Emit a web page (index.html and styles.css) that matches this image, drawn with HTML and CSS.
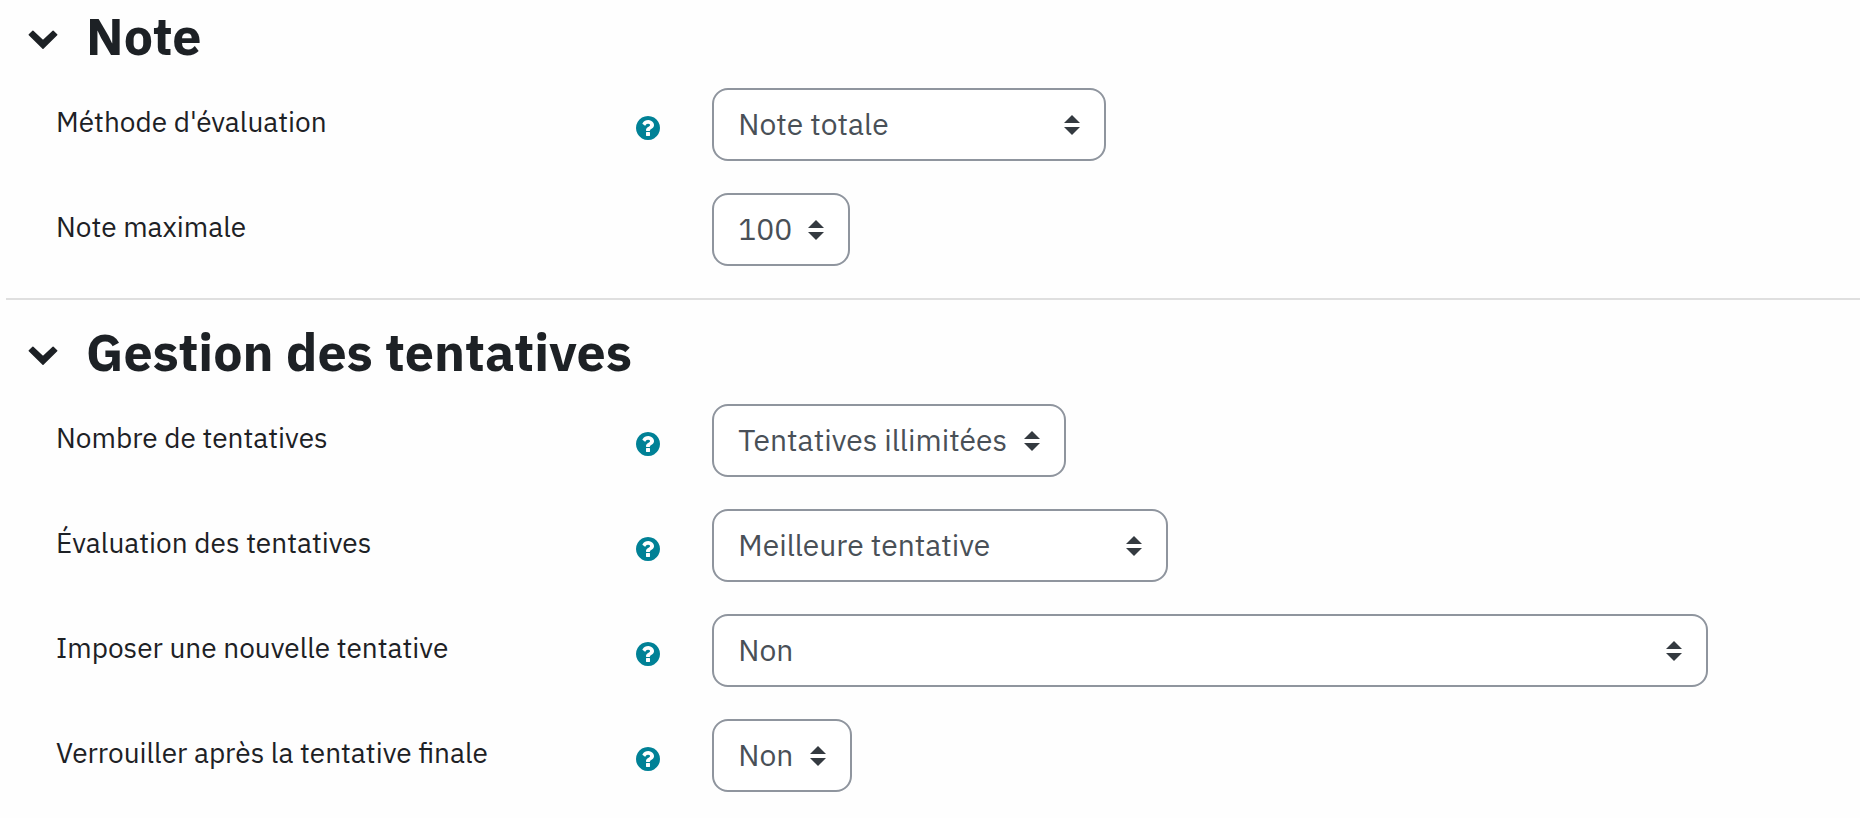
FILE: index.html
```html
<!DOCTYPE html>
<html lang="fr">
<head>
<meta charset="utf-8">
<title>Note et gestion des tentatives</title>
<link rel="stylesheet" href="styles.css">
</head>
<body>
<svg class="defs" aria-hidden="true">
  <symbol id="chevron" viewBox="0 0 30 20">
    <path d="M1.300 4.700 4.900 1.200 15 10.700 25.100 1.200 28.700 4.700 15 18.100z" stroke="currentColor" stroke-width="1.500" stroke-linejoin="round"/>
  </symbol>
  <symbol id="help" viewBox="0 0 1536 1536">
    <path d="M896 1248v-192q0-14-9-23t-23-9H672q-14 0-23 9t-9 23v192q0 14 9 23t23 9h192q14 0 23-9t9-23zm256-672q0-88-55.500-163t-138.500-116-170-41q-243 0-371 213-15 24 8 42l132 100q7 6 19 6 16 0 25-12 53-68 86-92 34-24 86-24 48 0 85.500 26t37.500 59q0 38-20 61t-68 45q-63 28-115.500 86.500T640 892v36q0 14 9 23t23 9h192q14 0 23-9t9-23q0-19 21.500-49.500T972 829q32-18 49-28.500t46-35 44.500-48 28-60.500 12.500-81zm384 192q0 209-103 385.500T1153.500 1433 768 1536t-385.500-103T103 1153.500 0 768t103-385.500T382.500 103 768 0t385.500 103T1433 382.500 1536 768z"/>
  </symbol>
</svg>
<form class="form">
  <section class="section">
    <div class="section-head">
      <button class="toggle" type="button" aria-label="Replier Note" aria-expanded="true"><svg class="chevron"><use href="#chevron"/></svg></button>
      <h2 class="title">Note</h2>
    </div>
    <div class="row">
      <div class="row-label">
        <label for="method">Méthode d'évaluation</label>
        <button class="help" type="button" aria-label="Aide"><svg class="help-icon"><use href="#help"/></svg></button>
      </div>
      <div class="row-field"><select class="select select-method" id="method"><option>Note totale</option></select></div>
    </div>
    <div class="row">
      <div class="row-label"><label for="max">Note maximale</label></div>
      <div class="row-field"><select class="select select-max" id="max"><option>100</option></select></div>
    </div>
  </section>
  <section class="section">
    <div class="section-head">
      <button class="toggle" type="button" aria-label="Replier Gestion des tentatives" aria-expanded="true"><svg class="chevron"><use href="#chevron"/></svg></button>
      <h2 class="title">Gestion des tentatives</h2>
    </div>
    <div class="row">
      <div class="row-label">
        <label for="count">Nombre de tentatives</label>
        <button class="help" type="button" aria-label="Aide"><svg class="help-icon"><use href="#help"/></svg></button>
      </div>
      <div class="row-field"><select class="select select-count" id="count"><option>Tentatives illimitées</option></select></div>
    </div>
    <div class="row">
      <div class="row-label">
        <label for="grading">Évaluation des tentatives</label>
        <button class="help" type="button" aria-label="Aide"><svg class="help-icon"><use href="#help"/></svg></button>
      </div>
      <div class="row-field"><select class="select select-grading" id="grading"><option>Meilleure tentative</option></select></div>
    </div>
    <div class="row">
      <div class="row-label">
        <label for="force">Imposer une nouvelle tentative</label>
        <button class="help" type="button" aria-label="Aide"><svg class="help-icon"><use href="#help"/></svg></button>
      </div>
      <div class="row-field"><select class="select select-force" id="force"><option>Non</option></select></div>
    </div>
    <div class="row">
      <div class="row-label">
        <label for="lock">Verrouiller après la tentative finale</label>
        <button class="help" type="button" aria-label="Aide"><svg class="help-icon"><use href="#help"/></svg></button>
      </div>
      <div class="row-field"><select class="select select-lock" id="lock"><option>Non</option></select></div>
    </div>
  </section>
</form>
</body>
</html>
```
FILE: styles.css
```css
* { box-sizing: border-box; }

body {
  margin: 0;
  background: #fefefe;
  color: #1d2125;
  font-family: "IBM Plex Sans", "Noto Sans", sans-serif;
  font-size: 28px;
  line-height: 40px;
}

.defs { position: absolute; width: 0; height: 0; }

.form { padding: 5px 0 0 6px; }

.section + .section {
  border-top: 2px solid #dfdfdf;
  padding-top: 21px;
}

.section-head {
  display: flex;
  align-items: center;
  gap: 28px;
  padding-left: 22px;
  margin-bottom: 21px;
}

.toggle,
.help {
  display: flex;
  padding: 0;
  border: 0;
  background: none;
  cursor: pointer;
}

.toggle { padding-top: 8px; color: #1d2125; }

.chevron { width: 30px; height: 20px; fill: currentColor; }

.title {
  margin: 0;
  font-size: 52px;
  font-weight: 700;
  line-height: 62px;
}

.row {
  display: grid;
  grid-template-columns: 38.1% 1fr;
  margin-bottom: 32px;
}

.row-label {
  display: flex;
  align-items: flex-start;
  justify-content: space-between;
  padding: 14px 52px 0 50px;
}

.help { margin-top: 14px; color: #008196; }

.help-icon { width: 24px; height: 24px; fill: currentColor; }

.row-field { padding-right: 152px; }

.select {
  display: block;
  max-width: 100%;
  height: 73px;
  padding: 0 56px 2px 24px;
  border: 2px solid #8f959e;
  border-radius: 16px;
  appearance: none;
  background: #fff url("data:image/svg+xml,%3Csvg xmlns='http://www.w3.org/2000/svg' viewBox='0 0 4 5'%3E%3Cpath fill='%23343a40' d='M2 0L0 2h4zm0 5L0 3h4z'/%3E%3C/svg%3E") no-repeat right 24px center / 16px 20px;
  color: #495057;
  font-family: inherit;
  font-size: 30px;
}

.select-method { width: 394px; }
.select-max { width: 138px; }
.select-count { width: 354px; }
.select-grading { width: 456px; }
.select-force { width: 100%; }
.select-lock { width: 140px; }
```
